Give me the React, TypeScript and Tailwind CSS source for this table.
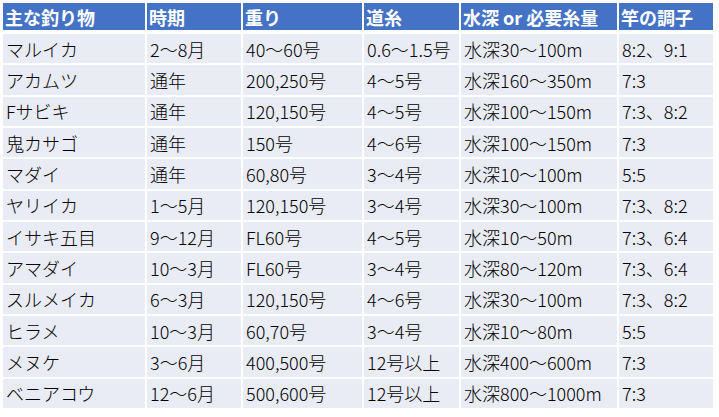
const headers = ["主な釣り物", "時期", "重り", "道糸", "水深 or 必要糸量", "竿の調子"];

const rows: string[][] = [
  ["マルイカ", "2〜8月", "40〜60号", "0.6〜1.5号", "水深30〜100m", "8:2、9:1"],
  ["アカムツ", "通年", "200,250号", "4〜5号", "水深160〜350m", "7:3"],
  ["Fサビキ", "通年", "120,150号", "4〜5号", "水深100〜150m", "7:3、8:2"],
  ["鬼カサゴ", "通年", "150号", "4〜6号", "水深100〜150m", "7:3"],
  ["マダイ", "通年", "60,80号", "3〜4号", "水深10〜100m", "5:5"],
  ["ヤリイカ", "1〜5月", "120,150号", "3〜4号", "水深30〜100m", "7:3、8:2"],
  ["イサキ五目", "9〜12月", "FL60号", "4〜5号", "水深10〜50m", "7:3、6:4"],
  ["アマダイ", "10〜3月", "FL60号", "3〜4号", "水深80〜120m", "7:3、6:4"],
  ["スルメイカ", "6〜3月", "120,150号", "4〜6号", "水深30〜100m", "7:3、8:2"],
  ["ヒラメ", "10〜3月", "60,70号", "3〜4号", "水深10〜80m", "5:5"],
  ["メヌケ", "3〜6月", "400,500号", "12号以上", "水深400〜600m", "7:3"],
  ["ベニアコウ", "12〜6月", "500,600号", "12号以上", "水深800〜1000m", "7:3"],
];

const cols = "grid grid-cols-[142px_94px_119px_95px_156px_94px] gap-x-[2px]";

export default function App() {
  return (
    <div className="min-h-screen w-[719px] bg-white pl-[3px] pt-[3px] font-['Noto_Sans_CJK_JP',sans-serif] text-[18px] leading-none">
      <div className="flex w-[710px] flex-col gap-[2px]">
        <div className={`${cols} mb-[2px]`}>
          {headers.map((h) => (
            <div
              key={h}
              className="flex h-[27px] items-center whitespace-nowrap bg-[#4472c4] pl-[2px] font-bold text-white"
            >
              {h}
            </div>
          ))}
        </div>
        {rows.map((r) => (
          <div key={r[0]} className={cols}>
            {r.map((c, i) => (
              <div
                key={i}
                className="flex h-[29.33px] items-center whitespace-nowrap bg-[#e9ebf5] pl-[3px] font-light text-black"
              >
                {c}
              </div>
            ))}
          </div>
        ))}
      </div>
    </div>
  );
}
